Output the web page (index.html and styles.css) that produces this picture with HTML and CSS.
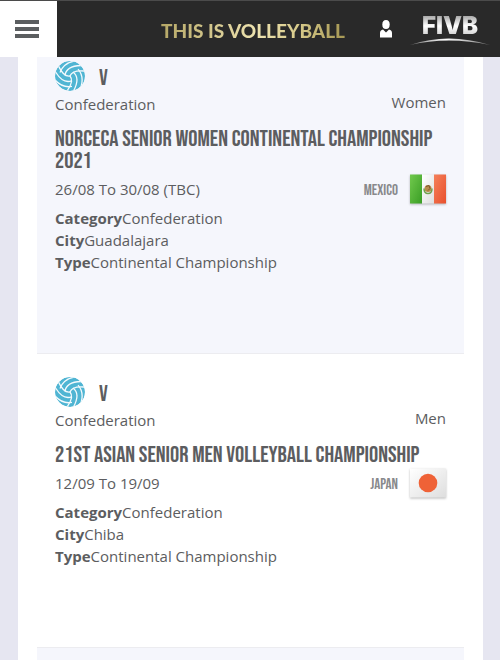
FILE: index.html
```html
<!DOCTYPE html>
<html lang="en">
<head>
<meta charset="utf-8">
<meta name="viewport" content="width=device-width, initial-scale=1">
<title>This is Volleyball</title>
<link rel="stylesheet" href="styles.css">
</head>
<body>
<svg class="sprite" aria-hidden="true">
  <symbol id="ball" viewBox="0 0 30 30">
    <circle cx="15" cy="15" r="15" fill="#50b5d3"/>
    <g id="panel" fill="none" stroke="#f4fafd" stroke-width="1.300">
      <path d="M15 15Q17 9 29 10"/>
      <path d="M10 14.500Q11 5 26 4.500"/>
      <path d="M5 11.500Q8 2.500 19 0"/>
    </g>
    <use href="#panel" transform="rotate(120 15 15)"/>
    <use href="#panel" transform="rotate(240 15 15)"/>
  </symbol>
</svg>

<header class="topbar">
  <button class="menu" type="button" aria-label="Menu">
    <svg width="24" height="18" viewBox="0 0 24 18"><path d="M0 0h24v4H0zM0 7h24v4H0zM0 14h24v4H0z" fill="#5b5e60"/></svg>
  </button>
  <a class="brand" href="#">THIS IS VOLLEYBALL</a>
  <a class="account" href="#" aria-label="Account">
    <svg width="12" height="18" viewBox="0 0 12 18" fill="#fff"><ellipse cx="6" cy="4.500" rx="3.700" ry="4.500"/><path d="M0 17.500V13q0-3 3-3.500L6 12.500 9 9.500q3 .5 3 3.500v4.500z"/></svg>
  </a>
  <a class="logo" href="#" aria-label="FIVB">
    <span class="logo-text">FIVB</span>
    <svg width="80" height="8" viewBox="0 0 80 8">
      <defs><linearGradient id="arc"><stop offset="0" stop-color="#777"/><stop offset=".45" stop-color="#fff"/><stop offset="1" stop-color="#777"/></linearGradient></defs>
      <path d="M0 7Q38-6 80 7Q38-2 0 7z" fill="url(#arc)"/>
    </svg>
  </a>
</header>

<main class="page">
  <article class="event tinted">
    <div class="badge"><svg class="ball"><use href="#ball"/></svg><span class="code">V</span></div>
    <div class="meta"><span>Confederation</span><span class="gender">Women</span></div>
    <h2>NORCECA SENIOR WOMEN CONTINENTAL CHAMPIONSHIP 2021</h2>
    <div class="when">
      <span>26/08 To 30/08 (TBC)</span>
      <span class="country">MEXICO</span>
      <svg class="flag" viewBox="0 0 36 29" role="img" aria-label="Flag of Mexico">
        <defs>
          <linearGradient id="green" x2="1" y2="1"><stop stop-color="#71c94d"/><stop offset="1" stop-color="#3a9e25"/></linearGradient>
          <linearGradient id="red" x2="1" y2="1"><stop stop-color="#f4805a"/><stop offset="1" stop-color="#e9502d"/></linearGradient>
          <linearGradient id="white" x2="1" y2="1"><stop stop-color="#fff"/><stop offset="1" stop-color="#dedede"/></linearGradient>
        </defs>
        <path d="M0 0h12v29H0z" fill="url(#green)"/>
        <path d="M12 0h12v29H12z" fill="url(#white)"/>
        <path d="M24 0h12v29H24z" fill="url(#red)"/>
        <circle cx="18" cy="14" r="3.500" fill="#b98a4b"/>
        <path d="M14 14q0 5 4 5t4-5" fill="none" stroke="#6fa04b" stroke-width="1.500"/>
        <path d="M16 12l3-1 1 3-2 2" fill="none" stroke="#7b552a"/>
      </svg>
    </div>
    <dl>
      <div><dt>Category</dt><dd>Confederation</dd></div>
      <div><dt>City</dt><dd>Guadalajara</dd></div>
      <div><dt>Type</dt><dd>Continental Championship</dd></div>
    </dl>
  </article>

  <article class="event">
    <div class="badge"><svg class="ball"><use href="#ball"/></svg><span class="code">V</span></div>
    <div class="meta"><span>Confederation</span><span class="gender">Men</span></div>
    <h2>21ST ASIAN SENIOR MEN VOLLEYBALL CHAMPIONSHIP</h2>
    <div class="when">
      <span>12/09 To 19/09</span>
      <span class="country">JAPAN</span>
      <svg class="flag" viewBox="0 0 36 29" role="img" aria-label="Flag of Japan">
        <path d="M0 0h36v29H0z" fill="url(#white)"/>
        <circle cx="18" cy="14.500" r="9.300" fill="#ef6237"/>
      </svg>
    </div>
    <dl>
      <div><dt>Category</dt><dd>Confederation</dd></div>
      <div><dt>City</dt><dd>Chiba</dd></div>
      <div><dt>Type</dt><dd>Continental Championship</dd></div>
    </dl>
  </article>

  <div class="event tinted next"></div>
</main>
</body>
</html>
```

FILE: styles.css
```css
* {
  box-sizing: border-box;
}

body {
  margin: 0;
  background: #e6e6f1;
  color: #5c5d60;
  font: 15px/22px "Open Sans", "Noto Sans", sans-serif;
}

a {
  color: inherit;
  text-decoration: none;
}

.sprite {
  position: absolute;
  width: 0;
  height: 0;
}

.topbar {
  position: fixed;
  inset: 0 0 auto;
  z-index: 1;
  display: flex;
  align-items: center;
  height: 57px;
  padding-right: 10px;
  background: #292929;
  border-top: 1px solid #4b4b4b;
}

.menu {
  display: grid;
  place-items: center;
  align-self: stretch;
  width: 57px;
  padding: 0 3px 0 0;
  border: 0;
  background: #fff;
}

.brand {
  flex: 1;
  padding-top: 4px;
  padding-left: 104px;
  font: 900 19px/24px Lato, sans-serif;
  white-space: nowrap;
  color: transparent;
  background: linear-gradient(90deg, #b5a766 104px, #eee3b0 200px, #d8cb8c 240px, #a99b57 284px);
  background-clip: text;
}

.account {
  display: flex;
  margin-right: 18px;
}

.logo {
  display: flex;
  flex-direction: column;
  align-items: center;
  gap: 2px;
  width: 80px;
  padding-top: 4px;
}

.logo-text {
  font: 900 24px/20px Inter, sans-serif;
  color: transparent;
  background: linear-gradient(#aaa, #fff 50%, #ccc);
  background-clip: text;
}

.page {
  display: flex;
  flex-direction: column;
  height: 100vh;
  margin: 0 17px 0 18px;
  padding: 37px 19px 0;
  overflow: hidden;
  background: #fff;
}

.event {
  flex: none;
  padding: 23px 18px 80px;
  border-top: 1px solid #ececf0;
}

.tinted {
  background: #f5f6fc;
}

.next {
  flex: 1;
  padding: 0;
}

.badge {
  display: flex;
  align-items: center;
  gap: 14px;
  height: 30px;
}

.ball {
  width: 30px;
  height: 30px;
  border-radius: 50%;
}

.code {
  padding-top: 4px;
  font: 23px/30px "Bebas Neue", sans-serif;
}

.meta,
.when {
  display: flex;
  justify-content: space-between;
}

.meta {
  margin: 2px 0 13px;
}

.gender {
  margin-top: -2px;
}

h2 {
  margin: 0 0 2px;
  font: 23px/22px "Bebas Neue", sans-serif;
}

.when {
  align-items: center;
  gap: 12px;
  margin-bottom: 3px;
}

.country {
  margin-left: auto;
  padding-top: 3px;
  font: 15px/22px "Bebas Neue", sans-serif;
  color: #88898c;
}

.flag {
  width: 36px;
  height: 30px;
  filter: drop-shadow(0 1px 1px #0004);
}

dl {
  margin: 0;
}

dl div {
  display: flex;
}

dt {
  font-weight: bold;
}

dd {
  margin: 0;
}
```
